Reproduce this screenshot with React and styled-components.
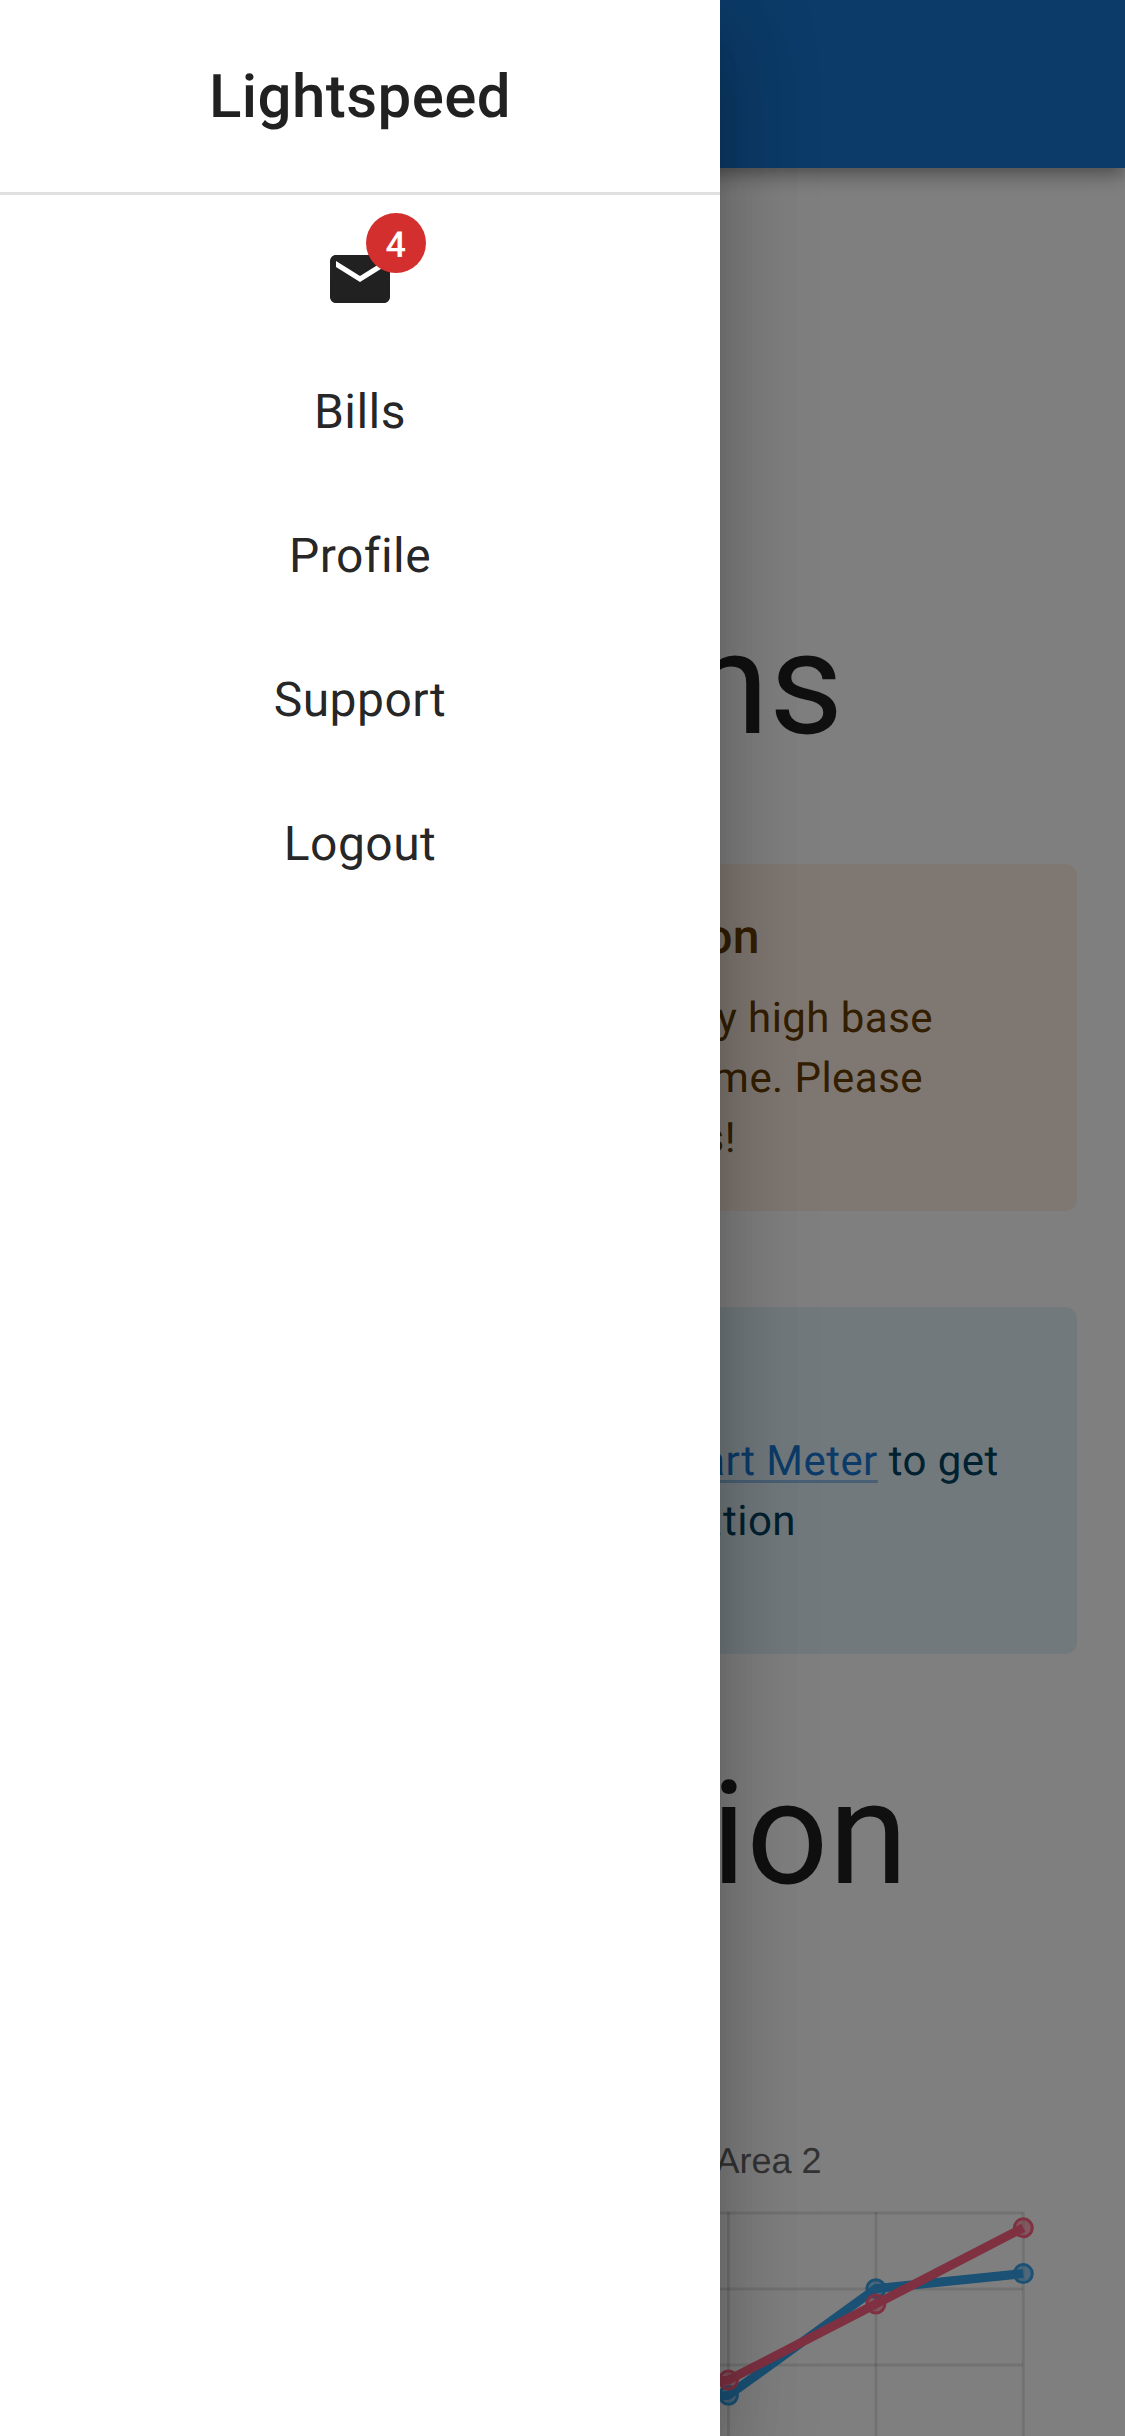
import React from "react";
import styled, { createGlobalStyle } from "styled-components";

const GlobalStyle = createGlobalStyle`
  *, *::before, *::after { box-sizing: border-box; }
  body {
    margin: 0;
    background: #fff;
    color: rgba(0, 0, 0, 0.87);
    font-family: Roboto, "Liberation Sans", sans-serif;
    text-rendering: geometricPrecision;
    overflow: hidden;
  }
`;

const Screen = styled.div`
  position: relative;
  width: 1125px;
  height: 2436px;
  overflow: hidden;
`;

const AppBar = styled.header`
  height: 168px;
  background: #1976d2;
  box-shadow:
    0 6px 12px -3px rgba(0, 0, 0, 0.2),
    0 12px 15px 0 rgba(0, 0, 0, 0.14),
    0 3px 30px 0 rgba(0, 0, 0, 0.12);
`;

const Page = styled.main`
  display: flex;
  flex-direction: column;
  gap: 96px;
  padding: 432px 48px 0;
`;

const Heading = styled.h3`
  margin: 0;
  padding-top: 1px;
  height: 168px;
  font-size: 144px;
  font-weight: 400;
  line-height: 168px;
`;

const tones = {
  warning: { bg: "#fff1e5", fg: "#663c00", icon: "#ed6c02" },
  info: { bg: "#e3f2f8", fg: "#014361", icon: "#0288d1" },
};

const AlertBox = styled.section`
  display: flex;
  height: 347px;
  padding: 18px 48px;
  border-radius: 12px;
  background: ${(p) => tones[p.$tone].bg};
  color: ${(p) => tones[p.$tone].fg};
`;

const AlertIcon = styled.svg`
  width: 66px;
  height: 66px;
  margin: 21px 36px 0 0;
  flex: none;
  fill: ${(p) => tones[p.$tone].icon};
`;

const AlertMessage = styled.div`
  padding: 24px 0;
  font-size: 42px;
  line-height: 60.06px;
  letter-spacing: 0.45px;
  white-space: nowrap;
`;

const AlertTitle = styled.div`
  width: ${(p) => p.$measure}px;
  margin: -5px 0 15.5px;
  font-size: 48px;
  font-weight: 500;
  line-height: 72px;
  text-align: right;
`;

const AlertLine = styled.div`
  display: flex;
  justify-content: flex-end;
  width: ${(p) => p.$measure}px;
  white-space: pre;
`;

const Link = styled.a`
  color: #1976d2;
  text-decoration: underline;
  text-decoration-color: rgba(25, 118, 210, 0.4);
  text-decoration-thickness: 3px;
  text-underline-offset: 5px;
`;

const ChartSvg = styled.svg`
  display: block;
  width: 1029px;
  height: 518px;
  margin-top: -96px;
  overflow: visible;
`;

const LegendText = styled.text`
  font: 36px "Liberation Sans", Helvetica, Arial, sans-serif;
  fill: #666;
`;

const Backdrop = styled.div`
  position: absolute;
  inset: 0;
  background: rgba(0, 0, 0, 0.5);
`;

const Drawer = styled.nav`
  position: absolute;
  top: 0;
  left: 0;
  width: 720px;
  height: 2436px;
  background: #fff;
  text-align: center;
  box-shadow:
    0 24px 30px -15px rgba(0, 0, 0, 0.2),
    0 48px 72px 6px rgba(0, 0, 0, 0.14),
    0 18px 90px 15px rgba(0, 0, 0, 0.12);
`;

const Brand = styled.div`
  padding: 49px 0 47px;
  border-bottom: 3px solid #e0e0e0;
  font-size: 60px;
  font-weight: 500;
  line-height: 96px;
  letter-spacing: 0.45px;
`;

const Menu = styled.ul`
  margin: 0;
  padding: 0;
  list-style: none;
`;

const MenuItem = styled.li`
  display: flex;
  justify-content: center;
  height: 144px;
  padding: ${(p) => (p.$icon ? "48px 48px 24px" : "37px 48px 35px")};
  font-size: 48px;
  line-height: 72px;
  letter-spacing: 0.45px;
`;

const BadgeAnchor = styled.span`
  position: relative;
  width: 72px;
  height: 72px;
`;

const MailIcon = styled.svg`
  display: block;
  width: 72px;
  height: 72px;
  fill: #212121;
`;

const Badge = styled.span`
  position: absolute;
  top: -30px;
  right: -30px;
  width: 60px;
  height: 60px;
  border-radius: 30px;
  background: #d32f2f;
  color: #fff;
  font-size: 36px;
  font-weight: 500;
  line-height: 64px;
`;

const GRID_X = [138.9, 286.3, 433.7, 581.1, 728.5, 875.9, 1023.3];
const GRID_Y = [2213, 2289, 2365, 2441];

const SERIES = [
  {
    name: "Area 2",
    color: "rgb(53, 162, 235)",
    fill: "rgba(53, 162, 235, 0.5)",
    values: [2410, 2420, 2405, 2415, 2395.3, 2288.7, 2273.6],
  },
  {
    name: "Area 1",
    color: "rgb(255, 99, 132)",
    fill: "rgba(255, 99, 132, 0.5)",
    values: [2400, 2390, 2410, 2400, 2380, 2304, 2227.8],
  },
];

function Chart() {
  return (
    <ChartSvg viewBox="48 1918 1029 518">
      <LegendText x="715.5" y="2172.5">Area 2</LegendText>
      <g stroke="rgba(0,0,0,0.1)" strokeWidth="3">
        {GRID_X.map((x) => (
          <line key={x} x1={x} x2={x} y1="2212" y2="2460" />
        ))}
        {GRID_Y.map((y) => (
          <line key={y} x1="138" x2="1023" y1={y} y2={y} />
        ))}
      </g>
      {SERIES.map((s) => (
        <g key={s.name} stroke={s.color}>
          <polyline
            fill="none"
            strokeWidth="9"
            points={s.values.map((v, i) => `${GRID_X[i]},${v}`).join(" ")}
          />
          {s.values.map((v, i) => (
            <circle key={i} cx={GRID_X[i]} cy={v} r="9" strokeWidth="3" fill={s.fill} />
          ))}
        </g>
      ))}
    </ChartSvg>
  );
}

export default function App() {
  return (
    <Screen>
      <GlobalStyle />
      <AppBar />
      <Page>
        <Heading>Suggestions</Heading>
        <AlertBox $tone="warning">
          <AlertIcon $tone="warning" viewBox="0 0 24 24">
            <path d="M12 6l7.5 13h-15L12 6m0-4L1 21h22L12 2zm1 14h-2v2h2v-2zm0-6h-2v4h2v-4z" />
          </AlertIcon>
          <AlertMessage>
            <AlertTitle $measure={562}>High Base Consumption</AlertTitle>
            <AlertLine $measure={735}>It seems you have a very high base</AlertLine>
            <AlertLine $measure={725}>consumption at the time. Please</AlertLine>
            <AlertLine $measure={538}>check all your devices!</AlertLine>
          </AlertMessage>
        </AlertBox>
        <AlertBox $tone="info">
          <AlertIcon $tone="info" viewBox="0 0 24 24">
            <path d="M11 7h2v2h-2zm0 4h2v6h-2zm1-9a10 10 0 1 0 0 20 10 10 0 0 0 0-20zm0 18a8 8 0 1 1 0-16 8 8 0 0 1 0 16z" />
          </AlertIcon>
          <AlertMessage>
            <AlertTitle $measure={330}>Smart Meter</AlertTitle>
            <AlertLine $measure={800.7}>
              <span>Connect your </span>
              <Link>Smart Meter</Link>
              <span> to get</span>
            </AlertLine>
            <AlertLine $measure={598}>more detailed information</AlertLine>
            <AlertLine $measure={320}>on your usage</AlertLine>
          </AlertMessage>
        </AlertBox>
        <Heading>Consumption</Heading>
        <Chart />
      </Page>
      <Backdrop />
      <Drawer>
        <Brand>Lightspeed</Brand>
        <Menu>
          <MenuItem $icon>
            <BadgeAnchor>
              <MailIcon viewBox="0 0 24 24">
                <path d="M20 4H4c-1.1 0-1.99.9-1.99 2L2 18c0 1.1.9 2 2 2h16c1.1 0 2-.9 2-2V6c0-1.100-.9-2-2-2zm0 4l-8 5-8-5V6l8 5 8-5v2z" />
              </MailIcon>
              <Badge>4</Badge>
            </BadgeAnchor>
          </MenuItem>
          <MenuItem>Bills</MenuItem>
          <MenuItem>Profile</MenuItem>
          <MenuItem>Support</MenuItem>
          <MenuItem>Logout</MenuItem>
        </Menu>
      </Drawer>
    </Screen>
  );
}
